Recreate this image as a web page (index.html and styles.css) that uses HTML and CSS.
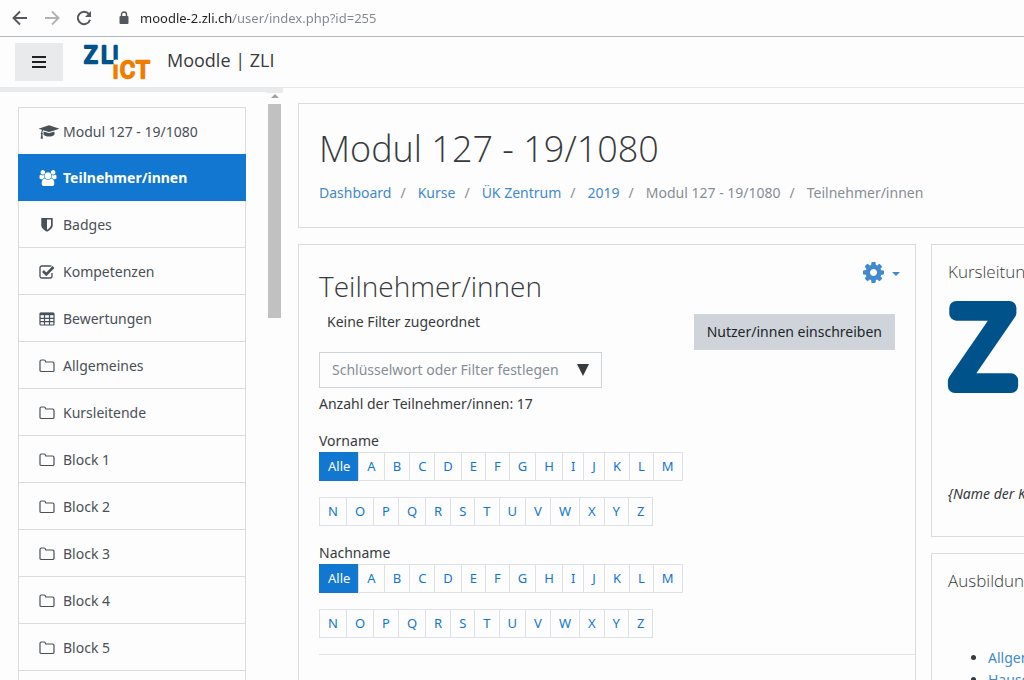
FILE: index.html
```html
<!DOCTYPE html>
<html lang="de">
<head>
<meta charset="utf-8">
<meta name="viewport" content="width=device-width, initial-scale=1">
<title>Modul 127 - 19/1080: Teilnehmer/innen</title>
<link rel="stylesheet" href="styles.css">
</head>
<body>
<svg class="sprite" aria-hidden="true">
  <symbol id="folder" viewBox="0 0 16 16"><path d="M1 3.5Q1 2 2.500 2H5Q6.500 2 6.500 3.500Q6.500 4 7 4H13.500Q15 4 15 5.500V12.500Q15 13.500 13.500 13.500H2.500Q1 13.500 1 12.500Z" fill="none" stroke="currentColor" stroke-width="1.200"/></symbol>
</svg>

<div class="browser-bar">
  <button class="tool" type="button" aria-label="Zurück"><svg viewBox="0 0 16 16"><path d="M15 8H2M8 1.500L1.500 8L8 14.500" fill="none" stroke="currentColor" stroke-width="1.900"/></svg></button>
  <button class="tool tool-off" type="button" aria-label="Vorwärts"><svg viewBox="0 0 16 16"><path d="M1 8H14M8 1.500L14.500 8L8 14.500" fill="none" stroke="currentColor" stroke-width="1.900"/></svg></button>
  <button class="tool" type="button" aria-label="Neu laden"><svg viewBox="0 0 16 16"><path d="M13 4.200A6.200 6.200 0 1 0 14 9.700" fill="none" stroke="currentColor" stroke-width="2"/><path d="M15 1V7H9Z" fill="currentColor"/></svg></button>
  <svg class="lock" viewBox="0 0 10 14" aria-hidden="true"><path d="M2.500 6V3.500A2.500 2.500 0 0 1 7.500 3.500V6" fill="none" stroke="currentColor" stroke-width="1.400"/><rect x="0.500" y="5" width="9" height="8" rx="1" fill="currentColor"/></svg>
  <input class="address" type="text" aria-label="Adresse" value="moodle-2.zli.ch/user/index.php?id=255">
</div>

<header class="navbar">
  <button class="menu-button" type="button" aria-label="Menü"><svg viewBox="0 0 14 12"><path d="M0 1H14M0 6H14M0 11H14" stroke="currentColor" stroke-width="2"/></svg></button>
  <a class="brand" href="#">
    <svg class="logo" viewBox="0 0 68 38" role="img" aria-label="ZLI ICT">
      <g class="logo-text">
        <text class="logo-blue" x="1" y="20">Z</text>
        <text class="logo-blue" x="18" y="20">L</text>
        <text class="logo-blue logo-i" x="30" y="16">I</text>
        <text class="logo-orange logo-i" x="30" y="35">I</text>
        <text class="logo-orange" x="37" y="35">C</text>
        <text class="logo-orange" x="53" y="35">T</text>
      </g>
      <circle cx="33" cy="19" r="2.600" fill="#fdfdfd"/>
    </svg>
    <span class="brand-name">Moodle | ZLI</span>
  </a>
</header>

<div class="page">
  <aside class="drawer">
    <nav class="nav-list" aria-label="Kursnavigation">
      <a class="nav-item" href="#"><svg class="icon icon-cap" viewBox="0 0 2304 1792"><path fill="currentColor" d="M1774 836l18 316q4 69-82 128t-235 93.5-323 34.5-323-34.5-235-93.5-82-128l18-316 574 181q22 7 48 7t48-7zm530-324q0 23-22 31l-1120 352q-4 1-10 1t-10-1l-652-206q-43 34-71 111.5t-34 178.5q63 36 63 109 0 69-58 107l58 433q2 14-8 25-9 11-24 11h-192q-15 0-24-11-10-11-8-25l58-433q-58-38-58-107 0-73 65-111 11-207 98-330l-333-104q-22-8-22-31t22-31l1120-352q4-1 10-1t10 1l1120 352q22 8 22 31z"/></svg>Modul 127 - 19/1080</a>
      <a class="nav-item active" href="#" aria-current="page"><svg class="icon icon-users" viewBox="0 0 1920 1792"><path fill="currentColor" d="M593 896q-162 5-265 128h-134q-82 0-138-40.5t-56-118.500q0-353 124-353 6 0 43.500 21t97.500 42.500 119 21.500q67 0 133-23-5 37-5 66 0 139 81 256zm1071 637q0 120-73 189.500t-194 69.500h-874q-121 0-194-69.500t-73-189.500q0-53 3.500-103.500t14-109 26.500-108.500 43-97.500 62-81 85.500-53.500 111.500-20q10 0 43 21.500t73 48 107 48 135 21.500 135-21.500 107-48 73-48 43-21.500q61 0 111.500 20t85.500 53.500 62 81 43 97.500 26.500 108.500 14 109 3.500 103.500zm-1024-1277q0 106-75 181t-181 75-181-75-75-181 75-181 181-75 181 75 75 181zm704 384q0 159-112.500 271.500t-271.500 112.500-271.500-112.500-112.500-271.500 112.500-271.500 271.500-112.500 271.500 112.500 112.500 271.500zm576 225q0 78-56 118.500t-138 40.500h-134q-103-123-265-128 81-117 81-256 0-29-5-66 66 23 133 23 59 0 119-21.500t97.500-42.500 43.500-21q124 0 124 353zm-128-609q0 106-75 181t-181 75-181-75-75-181 75-181 181-75 181 75 75 181z"/></svg>Teilnehmer/innen</a>
      <a class="nav-item" href="#"><svg class="icon" viewBox="-256 -100 1792 1792"><path fill="currentColor" d="M1088 832v-640h-448v1137q119-63 213-137 235-184 235-360zm192-768v768q0 86-33.500 170.500t-83 150-118 127.500-126.500 103-121 77.500-89.500 49.500-42.500 20q-12 6-26 6t-26-6q-16-7-42.500-20t-89.500-49.500-121-77.500-126.500-103-118-127.500-83-150-33.500-170.500v-768q0-26 19-45t45-19h1152q26 0 45 19t19 45z"/></svg>Badges</a>
      <a class="nav-item" href="#"><svg class="icon" viewBox="0 0 16 16"><path d="M13 9V12Q13 14 11 14H3Q1 14 1 12V4Q1 2 3 2H11Q12 2 12.500 2.300" fill="none" stroke="currentColor" stroke-width="1.300"/><path d="M4 7L7.300 10.300L14.500 3" fill="none" stroke="currentColor" stroke-width="2.600"/></svg>Kompetenzen</a>
      <a class="nav-item" href="#"><svg class="icon" viewBox="0 0 16 16"><rect x="1" y="2" width="14" height="12" rx="1" fill="none" stroke="currentColor" stroke-width="1.200"/><path d="M1 3H15" stroke="currentColor" stroke-width="2.400"/><path d="M1 7.300H15M1 10.600H15M5.500 3V14M10.500 3V14" stroke="currentColor" stroke-width="1.200"/></svg>Bewertungen</a>
      <a class="nav-item" href="#"><svg class="icon"><use href="#folder"/></svg>Allgemeines</a>
      <a class="nav-item" href="#"><svg class="icon"><use href="#folder"/></svg>Kursleitende</a>
      <a class="nav-item" href="#"><svg class="icon"><use href="#folder"/></svg>Block 1</a>
      <a class="nav-item" href="#"><svg class="icon"><use href="#folder"/></svg>Block 2</a>
      <a class="nav-item" href="#"><svg class="icon"><use href="#folder"/></svg>Block 3</a>
      <a class="nav-item" href="#"><svg class="icon"><use href="#folder"/></svg>Block 4</a>
      <a class="nav-item" href="#"><svg class="icon"><use href="#folder"/></svg>Block 5</a>
      <div class="nav-item"></div>
    </nav>
    <div class="scrollbar" aria-hidden="true"><div class="scroll-up"></div><div class="scroll-thumb"></div></div>
  </aside>

  <div class="content">
    <section class="card page-header">
      <h1>Modul 127 - 19/1080</h1>
      <ol class="breadcrumb">
        <li><a href="#">Dashboard</a></li>
        <li><a href="#">Kurse</a></li>
        <li><a href="#">ÜK Zentrum</a></li>
        <li><a href="#">2019</a></li>
        <li>Modul 127 - 19/1080</li>
        <li>Teilnehmer/innen</li>
      </ol>
    </section>

    <div class="columns">
      <main class="card main">
        <div class="title-row">
          <h2>Teilnehmer/innen</h2>
          <button class="gear" type="button" aria-label="Einstellungen"><svg class="gear-icon" viewBox="0 128 1536 1536"><path fill="currentColor" d="M1024 896q0-106-75-181t-181-75-181 75-75 181 75 181 181 75 181-75 75-181zm512-109v222q0 12-8 23t-20 13l-185 28q-19 54-39 91 35 50 107 138 10 12 10 25t-9 23q-27 37-99 108t-94 71q-12 0-26-9l-138-108q-44 23-91 38-16 136-29 186-7 28-36 28h-222q-14 0-24.500-8.500t-11.500-21.500l-28-184q-49-16-90-37l-141 107q-10 9-25 9-14 0-25-11-126-114-165-168-7-10-7-23 0-12 8-23 15-21 51-66.500t54-70.500q-27-50-41-99l-183-27q-13-2-21-12.500t-8-23.500v-222q0-12 8-23t19-13l186-28q14-46 39-92-40-57-107-138-10-12-10-24 0-10 9-23 26-36 98.500-107.500t94.500-71.500q13 0 26 10l138 107q44-23 91-38 16-136 29-186 7-28 36-28h222q14 0 24.500 8.500t11.500 21.500l28 184q49 16 90 37l142-107q9-9 24-9 13 0 25 10 129 119 165 170 7 8 7 22 0 12-8 23-15 21-51 66.500t-54 70.500q26 50 41 98l183 28q13 2 21 12.500t8 23.500z"/></svg><span class="caret"></span></button>
        </div>
        <div class="filter-row">
          <div class="filters">
            <p class="no-filter">Keine Filter zugeordnet</p>
            <div class="filter-box">
              <input class="filter-input" type="text" aria-label="Filter" placeholder="Schlüsselwort oder Filter festlegen">
              <button class="filter-toggle" type="button" aria-label="Filter anzeigen"><svg viewBox="0 0 12 12"><path d="M0 0H12L6 12Z" fill="currentColor"/></svg></button>
            </div>
          </div>
          <button class="enrol" type="button">Nutzer/innen einschreiben</button>
        </div>
        <p class="count">Anzahl der Teilnehmer/innen: 17</p>

        <section class="initials" aria-label="Vorname">
          <p class="label">Vorname</p>
          <div class="letters"><a class="on" href="#">Alle</a><a href="#">A</a><a href="#">B</a><a href="#">C</a><a href="#">D</a><a href="#">E</a><a href="#">F</a><a href="#">G</a><a href="#">H</a><a href="#">I</a><a href="#">J</a><a href="#">K</a><a href="#">L</a><a href="#">M</a></div>
          <div class="letters"><a href="#">N</a><a href="#">O</a><a href="#">P</a><a href="#">Q</a><a href="#">R</a><a href="#">S</a><a href="#">T</a><a href="#">U</a><a href="#">V</a><a href="#">W</a><a href="#">X</a><a href="#">Y</a><a href="#">Z</a></div>
        </section>
        <section class="initials" aria-label="Nachname">
          <p class="label">Nachname</p>
          <div class="letters"><a class="on" href="#">Alle</a><a href="#">A</a><a href="#">B</a><a href="#">C</a><a href="#">D</a><a href="#">E</a><a href="#">F</a><a href="#">G</a><a href="#">H</a><a href="#">I</a><a href="#">J</a><a href="#">K</a><a href="#">L</a><a href="#">M</a></div>
          <div class="letters"><a href="#">N</a><a href="#">O</a><a href="#">P</a><a href="#">Q</a><a href="#">R</a><a href="#">S</a><a href="#">T</a><a href="#">U</a><a href="#">V</a><a href="#">W</a><a href="#">X</a><a href="#">Y</a><a href="#">Z</a></div>
        </section>
        <hr class="rule">
      </main>

      <aside class="blocks">
        <section class="card block block-lead">
          <h3>Kursleitung</h3>
          <svg class="big-logo" viewBox="0 0 76 92" aria-hidden="true"><text x="2" y="86">Z</text></svg>
          <p class="lead-name">{Name der K</p>
        </section>
        <section class="card block">
          <h3>Ausbildung</h3>
          <ul class="links">
            <li><a href="#">Allgemeines</a></li>
            <li><a href="#">Hausordnung</a></li>
          </ul>
        </section>
      </aside>
    </div>
  </div>
</div>
</body>
</html>
```
FILE: styles.css
```css
* { box-sizing: border-box; }

body {
  margin: 0;
  height: 100vh;
  overflow: hidden;
  display: flex;
  flex-direction: column;
  background: #fdfdfd;
  color: #373a3c;
  font: 14px/22px "Noto Sans", "Open Sans", sans-serif;
}

h1, h2, h3, p, ol, ul { margin: 0; padding: 0; }
h1, h2, h3 { font-family: "Open Sans", "Noto Sans", sans-serif; font-weight: 300; }
a { color: #4289cf; text-decoration: none; }
button { padding: 0; border: 0; background: none; color: inherit; font: inherit; cursor: pointer; }
input { border: 0; padding: 0; background: none; font: inherit; outline: 0; }
svg { display: block; flex: none; }
.sprite { position: absolute; width: 0; height: 0; }

/* Browser toolbar */
.browser-bar {
  flex: none;
  display: flex;
  align-items: center;
  height: 37px;
  padding-left: 12px;
  border-bottom: 1px solid #b4b6b8;
}
.tool { width: 16px; height: 16px; margin-right: 16px; color: #54585d; }
.tool svg { width: 16px; height: 16px; }
.tool-off { color: #b0b2b4; }
.lock { width: 10px; height: 14px; margin: 0 11px; color: #54585d; }
.address {
  flex: 1;
  font-size: 13px;
  color: transparent;
  background: linear-gradient(90deg, #202124 93px, #80868b 93px);
  -webkit-background-clip: text;
  background-clip: text;
}

/* Site header */
.navbar {
  flex: none;
  display: flex;
  align-items: center;
  height: 51px;
  padding-left: 15px;
  border-bottom: 1px solid #e9eaec;
}
.menu-button {
  display: grid;
  place-items: center;
  width: 48px;
  height: 38px;
  margin-right: 20px;
  background: #e9eaec;
  color: #1d2125;
}
.menu-button svg { width: 14px; height: 12px; }
.brand { display: flex; align-items: center; gap: 16px; color: #373a3c; font: 18px/28px "Open Sans", sans-serif; }
.brand-name { padding-bottom: 4px; }
.logo { width: 68px; height: 38px; overflow: visible; }
.logo-text { font: 23px Roboto, sans-serif; stroke-width: 2.4; stroke-linejoin: round; }
.logo-blue { fill: #00538a; stroke: #00538a; }
.logo-orange { fill: #ef7d00; stroke: #ef7d00; }
.logo-i { font-size: 19px; }

.page { flex: 1; min-height: 0; display: flex; }

/* Drawer */
.drawer {
  flex: none;
  display: flex;
  justify-content: space-between;
  width: 283px;
  padding-left: 18px;
  border-top: 4px solid #e9eaec;
  overflow: hidden;
}
.nav-list { width: 228px; margin-top: 15px; border: 1px solid #dcdcdc; border-bottom: 0; height: max-content; }
.nav-item {
  display: flex;
  align-items: center;
  gap: 8px;
  height: 47px;
  padding: 2px 0 0 20px;
  border-bottom: 1px solid #dcdcdc;
  color: #495057;
}
.nav-item.active { margin: -1px -1px 0; padding-left: 21px; background: #1177d1; border-color: #1177d1; color: #fff; font-weight: 700; }
.icon { width: 16px; height: 16px; overflow: visible; }
.icon-cap { width: 20px; margin-right: -4px; }
.icon-users { width: 18px; margin-right: -2px; }
.scrollbar { width: 17px; border-top: 1px solid #e9eaec; }
.scroll-up { width: 8px; height: 4px; margin: 1px 5px 6px; background: #a3a3a3; clip-path: polygon(50% 0, 100% 100%, 0 100%); }
.scroll-thumb { height: 214px; margin: 0 2px; background: #c1c1c1; }

/* Content */
.content { flex: 1; min-width: 0; display: flex; flex-direction: column; gap: 16px; padding: 15px 0 0 15px; }
.card { border: 1px solid #dcdcdc; }
.page-header { flex: none; padding: 21px 0 23px 20px; border-right: 0; }
.page-header h1 { font-size: 36px; line-height: 48px; margin-bottom: 9px; }
.breadcrumb { display: flex; list-style: none; color: #868e96; }
.breadcrumb li + li::before { content: "/"; padding: 0 12px 0 9px; }

.columns { flex: 1; min-height: 0; display: flex; gap: 15px; }
.main { flex: 1; min-width: 0; padding: 16px 20px 0; border-bottom: 0; }
.title-row { display: flex; justify-content: space-between; align-items: flex-start; }
.title-row h2 { font-size: 28px; line-height: 50px; }
.gear { display: flex; align-items: center; gap: 8px; height: 22px; margin-right: -5px; color: #4289cf; }
.gear-icon { width: 21px; height: 21px; }
.caret { border: 4px solid transparent; border-top-color: currentColor; border-bottom: 0; margin-top: 4px; }
.filter-row { display: flex; justify-content: space-between; align-items: flex-start; }
.no-filter { padding-left: 8px; margin-bottom: 19px; }
.filter-box { display: flex; align-items: center; justify-content: space-between; width: 283px; height: 36px; padding: 0 12px; border: 1px solid #ced4da; }
.filter-input { flex: 1; min-width: 0; color: #495057; }
.filter-input::placeholder { color: #868e96; opacity: 1; }
.filter-toggle svg { width: 12px; height: 12px; }
.enrol { height: 36px; margin-top: 3px; padding: 0 13px; background: #ced4da; color: #212529; }
.count { margin: 5px 0 15px; }

.initials { margin-bottom: 16px; }
.letters { display: flex; color: #1177d1; font-size: 13px; line-height: 27px; }
.letters + .letters { margin-top: 16px; }
.letters a { padding: 0 8px; margin-left: -1px; border: 1px solid #dee2e6; color: #1177d1; }
.letters a:first-child { margin-left: 0; }
.letters a.on { background: #1177d1; border-color: #1177d1; color: #fff; }
.rule { margin: 0 -20px 0 0; border: 0; border-top: 1px solid #dee2e6; }

/* Right-hand blocks, running past the window edge */
.blocks { flex: 0 0 93px; min-width: 0; display: flex; flex-direction: column; gap: 16px; overflow: hidden; white-space: nowrap; }
.block { flex: none; padding: 15px 0 31px 16px; border-right: 0; }
.block h3 { font-size: 17px; line-height: 24px; }
.big-logo { width: 76px; height: 92px; margin: 16px 0 91px; overflow: visible; }
.big-logo text { font: 300 110px Roboto, sans-serif; fill: #00538a; stroke: #00538a; stroke-width: 14px; stroke-linejoin: round; }
.lead-name { font-style: italic; }
.links { margin: 54px 0 0; padding-left: 40px; }
```
